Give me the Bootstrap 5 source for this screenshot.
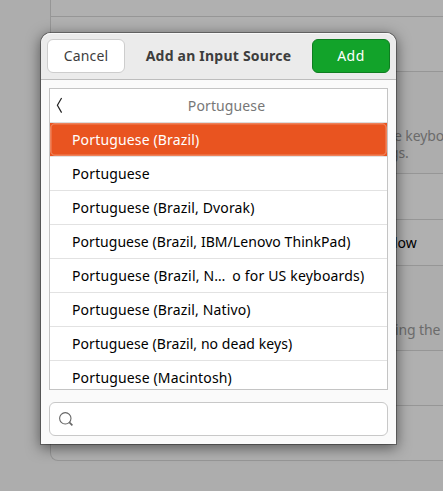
<!DOCTYPE html>
<html lang="en">
<head>
<meta charset="utf-8">
<meta name="viewport" content="width=device-width, initial-scale=1">
<title>Add an Input Source</title>
<link href="https://cdn.jsdelivr.net/npm/bootstrap@5.3.0/dist/css/bootstrap.min.css" rel="stylesheet">
<style>
body{font-family:"Noto Sans","Open Sans",sans-serif;font-size:14px;line-height:17px;background:#adadad;color:#000;height:491px}
.settings{width:443px;padding-left:50px}
.panel{background:#b0b0b0;border:1px solid #969696;border-right:0;border-radius:8px 0 0 8px}
.panel-top{height:72px;border-top:0;border-radius:0 0 0 8px}
.panel-line{border-bottom:1px solid #969696}
.h-16{height:17px}.h-45{height:46px}.h-54{height:55px}
.note{height:101px;padding:55px 0 0 344px;color:#6b6b6b;letter-spacing:-.1px}
.note-end{margin-left:-4px}
.note-short{height:84px;padding:55px 0 0 345px}
.panel-mid{height:93px}.panel-end{height:111px}
.row-text{padding:14px 0 0 343px}
.dialog{left:41px;top:33px;width:355px;height:411px;background:#fafafa;border-radius:10px 10px 0 0;box-shadow:0 0 0 1px rgba(0,0,0,.32),0 3px 14px 1px rgba(0,0,0,.5)}
.dialog-head{height:47px;padding:0 6px;background:#ebebeb;border-bottom:1px solid #bdbdbd;border-radius:10px 10px 0 0;box-shadow:inset 0 1px #f8f8f8}
.dialog-title{font-size:14px;font-weight:700;color:#3d3d3d;letter-spacing:.22px}
.action{width:78px;height:34px;padding:0 0 2px;border-radius:6px;font-size:14px;line-height:17px;letter-spacing:.15px}
.action-cancel,.action-cancel:hover{background:#fff;border-color:#cdcdcd;color:#3d3d3d}
.action-add,.action-add:hover{background:#12a32a;border-color:#0e7d20;color:#fff;letter-spacing:.5px}
.sources{height:302px;background:#fff;border:1px solid #c4c4c4;border-radius:0}
.sources-head{height:34px;border-bottom:1px solid #dcdcdc;color:#777;padding-left:16px;letter-spacing:.12px}
.back{left:5px;top:8px}
.source{height:34px;padding:0 0 0 22px;border:0;border-bottom:1px solid #e2e2e2!important;background:transparent;color:#000;display:flex;align-items:center;white-space:pre;letter-spacing:.15px}
.source-snug{letter-spacing:.06px}
.dots{letter-spacing:3px}
.source-wide{letter-spacing:.19px}
.source.active{background:#e95420;color:#fff;margin:0}
.source.active::after{content:"";position:absolute;inset:0;border:1px solid #ef8159;border-radius:5px;box-shadow:inset 0 0 0 .6px #ef8159}
.search-box{height:34px;background:#fff;border:1px solid #c8c8c8;border-radius:6px;padding-left:8px}
.stack{gap:12px}
</style>
<script src="https://cdn.jsdelivr.net/npm/bootstrap@5.3.0/dist/js/bootstrap.bundle.min.js"></script>
</head>
<body class="position-relative overflow-hidden">
<main class="settings text-nowrap overflow-hidden">
  <section class="panel panel-top"><div class="panel-line h-16"></div></section>
  <p class="note m-0">e keybo<br><span class="note-end">gs.</span></p>
  <section class="panel panel-mid"><div class="panel-line h-45"></div><div class="row-text">low</div></section>
  <p class="note note-short m-0">ing the</p>
  <section class="panel panel-end"><div class="panel-line h-54"></div></section>
</main>
<div class="dialog position-absolute d-flex flex-column" role="dialog" aria-label="Add an Input Source">
  <header class="dialog-head d-flex align-items-center justify-content-between">
    <button class="btn action action-cancel" type="button">Cancel</button>
    <h1 class="dialog-title m-0">Add an Input Source</h1>
    <button class="btn action action-add" type="button">Add</button>
  </header>
  <div class="d-flex flex-column px-2 pt-2 stack">
    <div class="sources overflow-hidden">
      <div class="sources-head d-flex align-items-center justify-content-center position-relative">
        <svg class="back position-absolute" width="10" height="17" viewBox="0 0 10 17" fill="none" stroke="#222" stroke-width="1.2"><path d="M6.6 1 2.4 8.3 6.6 15.6"/></svg>
        <span>Portuguese</span>
      </div>
      <div class="list-group list-group-flush">
        <div class="list-group-item source active"><span>Portuguese (Brazil)</span></div>
        <div class="list-group-item source"><span>Portuguese</span></div>
        <div class="list-group-item source"><span>Portuguese (Brazil, Dvorak)</span></div>
        <div class="list-group-item source source-snug"><span>Portuguese (Brazil, IBM/Lenovo ThinkPad)</span></div>
        <div class="list-group-item source source-wide"><span>Portuguese (Brazil, N<span class="dots">…</span> o for US keyboards)</span></div>
        <div class="list-group-item source"><span>Portuguese (Brazil, Nativo)</span></div>
        <div class="list-group-item source source-snug"><span>Portuguese (Brazil, no dead keys)</span></div>
        <div class="list-group-item source"><span>Portuguese (Macintosh)</span></div>
      </div>
    </div>
    <div class="search-box d-flex align-items-center">
      <svg width="16" height="16" viewBox="0 0 16 16" fill="none" stroke="#666" stroke-width="1.1"><circle cx="7.3" cy="7.3" r="5.7"/><path d="m11.4 11.4 3 3" stroke-width="1.6"/></svg>
    </div>
  </div>
</div>
</body>
</html>
